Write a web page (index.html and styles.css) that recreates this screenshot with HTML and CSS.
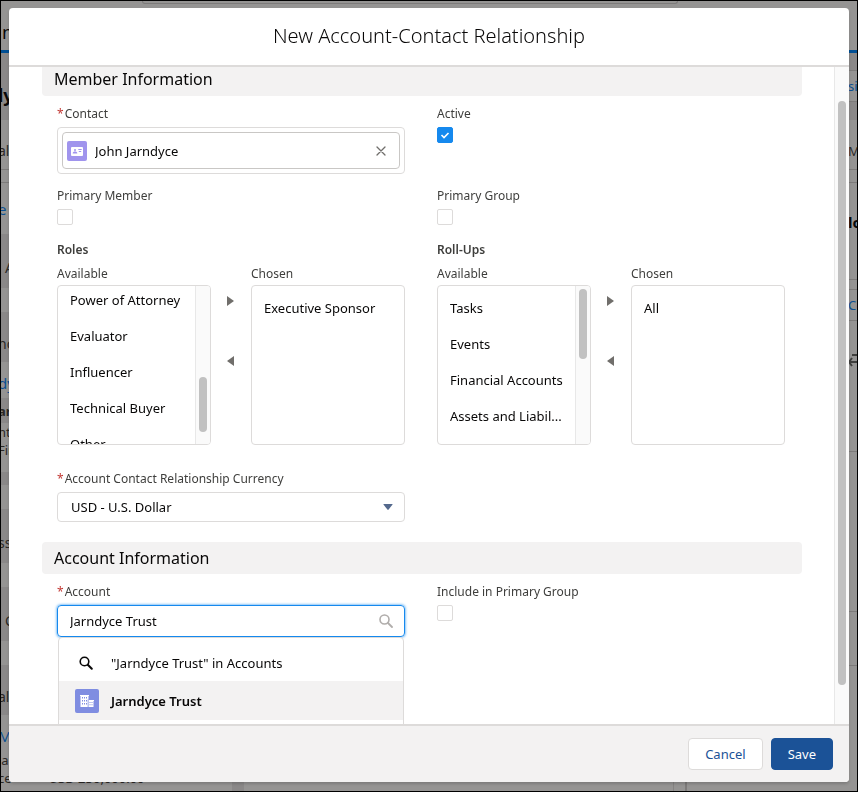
FILE: index.html
```html
<!DOCTYPE html>
<html lang="en">

<head>
    <meta charset="UTF-8">
    <meta name="viewport" content="width=device-width, initial-scale=1.0">
    <title>New Account-Contact Relationship</title>
    <link rel="stylesheet" href="styles.css">
</head>

<body>
    <!-- record page under the dialog -->
    <div class="page" aria-hidden="true">
        <div class="page-top">
            <div class="page-search"></div>
            <div class="page-nav">n</div>
        </div>
        <div class="page-main">
            <div class="page-left">
                <div class="strip dark h67 name">ly</div>
                <div class="strip h50 line head">al</div>
                <div class="strip h13 line"></div>
                <div class="strip h51 link">e</div>
                <div class="strip dark h54 inset">A</div>
                <div class="strip h24"></div>
                <div class="strip dark h50 head">nc</div>
                <div class="strip h36 link">dy</div>
                <div class="strip dark h25 bold">ar</div>
                <div class="strip h18">nt</div>
                <div class="strip h18">Fin</div>
                <div class="strip h13"></div>
                <div class="strip dark h13"></div>
                <div class="strip h24"></div>
                <div class="strip dark h54 head">ss</div>
                <div class="strip h24"></div>
                <div class="strip dark h54 inset">C</div>
                <div class="strip h24"></div>
                <div class="strip dark h50 head">al</div>
                <div class="strip h36 link">Mc</div>
                <div class="strip h18">ia</div>
                <div class="strip h18">ce <span class="amount">USD 250,000.00</span></div>
            </div>
            <div class="page-gutter"></div>
            <div class="page-middle"></div>
            <div class="page-split"></div>
            <div class="page-right">
                <div class="strip dark h18 line"></div>
                <div class="strip h31 link small line">si</div>
                <div class="strip dark h18"></div>
                <div class="strip h50 line">M</div>
                <div class="strip h13 line"></div>
                <div class="strip h97 line bold dark-text">lo</div>
                <div class="strip h10 line"></div>
                <div class="strip h31 line link small">Ce</div>
                <div class="strip h131 line">
                    <svg class="page-arrow" viewBox="0 0 12 14" width="12" height="14"><path d="M1 9h12M4 5L1 9l3 4M4 2h9" fill="none" stroke="#3e3e3c" stroke-width="2"/></svg>
                </div>
                <div class="strip h160 line"></div>
                <div class="strip h54 line"></div>
            </div>
        </div>
    </div>

    <div class="backdrop">
        <form class="modal" role="dialog" aria-labelledby="title">
            <header class="modal-header">
                <h1 id="title">New Account-Contact Relationship</h1>
            </header>

            <div class="modal-body">
                <div class="content">
                    <h2 class="section cut">Member Information</h2>

                    <div class="row">
                        <div class="field">
                            <label for="contact"><span class="req">*</span>Contact</label>
                            <div class="pill-box">
                                <div class="pill">
                                    <svg class="contact-icon" viewBox="0 0 20 20" width="20" height="20">
                                        <rect width="20" height="20" rx="2" fill="#a094ed"/>
                                        <rect x="4" y="6" width="12" height="9" rx="1" fill="#fff"/>
                                        <circle cx="8" cy="9" r="1" fill="#a094ed"/>
                                        <path d="M5.700 12.600c0-1.500 1-2 2.300-2s2.300.5 2.300 2zM11.300 8h3.400v1h-3.400zM11.800 10h2.400v1h-2.400z" fill="#a094ed"/>
                                    </svg>
                                    <input id="contact" type="text" value="John Jarndyce" readonly>
                                    <button type="button" class="clear" aria-label="Clear">
                                        <svg viewBox="0 0 10 10" width="10" height="10"><path d="M1 1l8 8M9 1L1 9" stroke="#706e6b" stroke-width="1.300" stroke-linecap="round"/></svg>
                                    </button>
                                </div>
                            </div>
                        </div>
                        <div class="field">
                            <label for="active">Active</label>
                            <input id="active" type="checkbox" checked>
                        </div>
                    </div>

                    <div class="row">
                        <div class="field">
                            <label for="primary-member">Primary Member</label>
                            <input id="primary-member" type="checkbox">
                        </div>
                        <div class="field">
                            <label for="primary-group">Primary Group</label>
                            <input id="primary-group" type="checkbox">
                        </div>
                    </div>

                    <div class="row lists">
                        <div role="group" aria-labelledby="roles">
                            <h3 id="roles">Roles</h3>
                            <div class="duel">
                                <div class="side">
                                    <span class="list-label" id="roles-available">Available</span>
                                    <div class="list">
                                        <ul class="scrolled" role="listbox" aria-labelledby="roles-available">
                                            <li role="option">Power of Attorney</li>
                                            <li role="option">Evaluator</li>
                                            <li role="option">Influencer</li>
                                            <li role="option">Technical Buyer</li>
                                            <li role="option">Other</li>
                                        </ul>
                                        <div class="track low"><div class="thumb"></div></div>
                                    </div>
                                </div>
                                <div class="movers">
                                    <button type="button" aria-label="Add role"><svg viewBox="0 0 8 10" width="8" height="10"><path d="M0 0l7 5-7 5z" fill="#706e6b"/></svg></button>
                                    <button type="button" aria-label="Remove role"><svg viewBox="0 0 8 10" width="8" height="10"><path d="M7 0L0 5l7 5z" fill="#706e6b"/></svg></button>
                                </div>
                                <div class="side">
                                    <span class="list-label" id="roles-chosen">Chosen</span>
                                    <div class="list">
                                        <ul role="listbox" aria-labelledby="roles-chosen">
                                            <li role="option">Executive Sponsor</li>
                                        </ul>
                                    </div>
                                </div>
                            </div>
                        </div>
                        <div role="group" aria-labelledby="rollups">
                            <h3 id="rollups">Roll-Ups</h3>
                            <div class="duel">
                                <div class="side">
                                    <span class="list-label" id="rollups-available">Available</span>
                                    <div class="list">
                                        <ul role="listbox" aria-labelledby="rollups-available">
                                            <li role="option">Tasks</li>
                                            <li role="option">Events</li>
                                            <li role="option">Financial Accounts</li>
                                            <li role="option">Assets and Liabil...</li>
                                        </ul>
                                        <div class="track"><div class="thumb"></div></div>
                                    </div>
                                </div>
                                <div class="movers">
                                    <button type="button" aria-label="Add roll-up"><svg viewBox="0 0 8 10" width="8" height="10"><path d="M0 0l7 5-7 5z" fill="#706e6b"/></svg></button>
                                    <button type="button" aria-label="Remove roll-up"><svg viewBox="0 0 8 10" width="8" height="10"><path d="M7 0L0 5l7 5z" fill="#706e6b"/></svg></button>
                                </div>
                                <div class="side">
                                    <span class="list-label" id="rollups-chosen">Chosen</span>
                                    <div class="list">
                                        <ul role="listbox" aria-labelledby="rollups-chosen">
                                            <li role="option">All</li>
                                        </ul>
                                    </div>
                                </div>
                            </div>
                        </div>
                    </div>

                    <div class="row">
                        <div class="field">
                            <label for="currency"><span class="req">*</span>Account Contact Relationship Currency</label>
                            <div class="select-box">
                                <select id="currency">
                                    <option>USD - U.S. Dollar</option>
                                </select>
                                <svg class="caret" viewBox="0 0 10 6" width="10" height="6"><path d="M1 0h8q1 0 .4.800L5.600 5.600q-.6.600-1.200 0L.6.800Q0 0 1 0z" fill="#54698d"/></svg>
                            </div>
                        </div>
                    </div>

                    <h2 class="section">Account Information</h2>

                    <div class="row">
                        <div class="field">
                            <label for="account"><span class="req">*</span>Account</label>
                            <div class="lookup">
                                <input id="account" type="text" value="Jarndyce Trust">
                                <svg class="lookup-icon" viewBox="0 0 14 14" width="14" height="14"><circle cx="5.500" cy="5.500" r="4.500" fill="none" stroke="#b0adab" stroke-width="1.600"/><path d="M9 9l4 4" stroke="#b0adab" stroke-width="1.800" stroke-linecap="round"/></svg>
                                <ul class="menu" role="listbox" aria-label="Accounts">
                                    <li role="option">
                                        <svg viewBox="0 0 24 24" width="24" height="24"><circle cx="9.500" cy="10.500" r="4.300" fill="none" stroke="#080707" stroke-width="1.600"/><path d="M12.800 13.800l4 4" stroke="#080707" stroke-width="2" stroke-linecap="round"/></svg>
                                        "Jarndyce Trust" in Accounts
                                    </li>
                                    <li class="current" role="option">
                                        <svg viewBox="0 0 24 24" width="24" height="24">
                                            <rect width="24" height="24" rx="2" fill="#7f8de1"/>
                                            <path d="M5 6h9v1h-.5v11h-8V7H5zM13 11h6v1h-.5v6H13z" fill="#fff"/>
                                            <path d="M7 8h1v1.500H7zM9 8h1v1.500H9zM11 8h1v1.500h-1zM7 11h1v1.500H7zM9 11h1v1.500H9zM11 11h1v1.500h-1zM7 14h1v1.500H7zM9 14h1v1.500H9zM11 14h1v1.500h-1zM14.500 13h1v1h-1zM16.500 13h1v1h-1zM14.500 15.300h1v1h-1zM16.500 15.300h1v1h-1zM12.700 10.500h.8v7.500h-.8z" fill="#7f8de1"/>
                                        </svg>
                                        Jarndyce Trust
                                    </li>
                                </ul>
                            </div>
                        </div>
                        <div class="field">
                            <label for="include">Include in Primary Group</label>
                            <input id="include" type="checkbox">
                        </div>
                    </div>
                </div>
                <div class="track main-track"><div class="thumb"></div></div>
            </div>

            <footer class="modal-footer">
                <button type="button" class="btn">Cancel</button>
                <button type="submit" class="btn brand">Save</button>
            </footer>
        </form>
    </div>
</body>

</html>
```
FILE: styles.css
```css
* {
    box-sizing: border-box;
}

body {
    margin: 0;
    height: 100vh;
    overflow: hidden;
    border: 1px solid black;
    font-family: "Noto Sans", "Open Sans", sans-serif;
    font-size: 13px;
    color: #080707;
}

h1, h2, h3, ul {
    margin: 0;
    padding: 0;
    font-weight: normal;
}

ul {
    list-style: none;
}

input, select, button {
    font-family: inherit;
    font-size: 13px;
    color: inherit;
}

svg {
    display: block;
    flex: none;
}

/* record page */
.page {
    display: flex;
    flex-direction: column;
    height: 100%;
    overflow: hidden;
    background-color: #959493;
    white-space: nowrap;
}

.page-top {
    flex: none;
    height: 52px;
    border-bottom: 3px solid #014f94;
}

.page-search {
    height: 3px;
    margin: 0 20.9% 0 16.5%;
    border: 1px solid #7d7b7a;
    border-top: none;
    border-radius: 0 0 4px 4px;
}

.page-nav {
    padding: 16px 1px;
    font-size: 18px;
    line-height: 24px;
}

.page-main {
    display: flex;
    flex: 1;
    min-height: 0;
}

.page-left {
    width: 27%;
    overflow: hidden;
}

.page-gutter {
    width: 12px;
    background-color: #8a8888;
}

.page-middle {
    flex: 1;
}

.page-split {
    width: 14px;
    border-left: 1px solid #858382;
    border-right: 2px solid #7d7b7a;
}

.page-right {
    width: 170px;
    padding-left: 161px;
    overflow: hidden;
}

.strip {
    display: flex;
    align-items: center;
    color: #2b2826;
}

.page-left .strip {
    text-indent: -3px;
}

.dark { background-color: #8a8888; }
.line { border-bottom: 1px solid #7d7b7a; }
.link { color: #0b4f91; font-size: 15px; }
.small { font-size: 13px; }
.head { font-size: 14px; }
.bold { font-weight: bold; }
.dark-text { font-size: 15px; color: #080707; }
.inset { padding-left: 7px; font-size: 14px; }

.name {
    padding-top: 16px;
    font-size: 18px;
    font-weight: bold;
    color: #080707;
}

.amount {
    margin-left: 40px;
}

.page-arrow {
    margin-bottom: 52px;
}

.h10 { height: 10px; }
.h13 { height: 13px; }
.h18 { height: 18px; }
.h24 { height: 24px; }
.h25 { height: 25px; }
.h31 { height: 31px; }
.h36 { height: 36px; padding-top: 6px; }
.h50 { height: 50px; padding-top: 12px; }
.h51 { height: 51px; }
.h54 { height: 54px; padding-top: 12px; }
.h67 { height: 67px; }
.h97 { height: 97px; padding-bottom: 18px; }
.h131 { height: 131px; }
.h160 { height: 160px; }

/* dialog */
.backdrop {
    position: fixed;
    inset: 0;
    display: flex;
    padding: 8px 9px 10px;
}

.modal {
    display: flex;
    flex: 1;
    flex-direction: column;
    min-width: 0;
    overflow: hidden;
    border-radius: 4px;
    background-color: white;
    box-shadow: 0 2px 3px rgba(0, 0, 0, 0.16);
}

.modal-header {
    padding: 14px 16px 15px;
    border-bottom: 2px solid #dddbda;
    text-align: center;
}

.modal-header h1 {
    font-size: 20px;
    font-weight: 300;
    line-height: 28px;
}

.modal-body {
    display: flex;
    flex: 1;
    min-height: 0;
    overflow: hidden;
}

.content {
    flex: 1;
    min-width: 0;
    padding: 0 32px 0 33px;
}

.section {
    margin-top: 20px;
    margin-bottom: 9px;
    padding: 4px 12px;
    border-radius: 4px;
    background-color: #f3f2f2;
    font-size: 16px;
    line-height: 24px;
}

.cut {
    margin-top: 0;
    padding: 0 12px 5px;
    border-radius: 0 0 4px 4px;
}

.row {
    display: grid;
    grid-template-columns: 1fr 1fr;
    gap: 32px;
    margin-bottom: 13px;
    padding: 0 17px 0 15px;
}

.lists {
    margin-top: 16px;
    margin-bottom: 25px;
}

label, .list-label {
    display: block;
    font-size: 12px;
    line-height: 18px;
    color: #3e3e3c;
}

.field > label {
    margin-bottom: 4px;
}

.req {
    margin-right: 1px;
    color: #c23934;
}

input[type="checkbox"] {
    appearance: none;
    display: block;
    width: 16px;
    height: 16px;
    margin: 0;
    border: 1px solid #dddbda;
    border-radius: 2px;
    background-color: white;
}

input[type="checkbox"]:checked {
    border-color: #1589ee;
    background: #1589ee url("data:image/svg+xml,%3Csvg xmlns='http://www.w3.org/2000/svg' viewBox='0 0 14 14'%3E%3Cpath d='M3.500 7l2.500 2.500 4.500-4.500' fill='none' stroke='white' stroke-width='1.600'/%3E%3C/svg%3E");
}

.pill-box {
    padding: 4px;
    border: 1px solid #dddbda;
    border-radius: 4px;
}

.pill {
    display: flex;
    align-items: center;
    height: 37px;
    padding: 0 12px 0 4px;
    border: 1px solid #c9c7c5;
    border-radius: 4px;
}

.pill input {
    flex: 1;
    min-width: 0;
    padding: 0 8px;
    border: none;
    outline: none;
    background: none;
}

.clear {
    padding: 1px;
    border: none;
    background: none;
}

/* dueling lists */
h3 {
    margin-bottom: 6px;
    font-size: 12px;
    font-weight: 600;
    line-height: 18px;
    color: #3e3e3c;
}

.duel {
    display: flex;
}

.side {
    flex: 1;
    min-width: 0;
}

.list {
    display: flex;
    height: 160px;
    margin-top: 2px;
    overflow: hidden;
    border: 1px solid #dddbda;
    border-radius: 4px;
}

.list ul {
    flex: 1;
    min-width: 0;
    padding: 4px 0;
}

.list .scrolled {
    margin-top: -8px;
}

.list li {
    padding: 8px 0 8px 12px;
    line-height: 20px;
    white-space: nowrap;
}

.track {
    width: 15px;
    padding: 3px 3px 0;
    border-left: 1px solid #e8e8e8;
    background-color: #fafafa;
}

.thumb {
    width: 8px;
    height: 70px;
    border-radius: 4px;
    background-color: #c1c1c1;
}

.low {
    padding-top: 91px;
}

.low .thumb {
    height: 55px;
}

.main-track {
    padding-top: 34px;
    padding-bottom: 39px;
}

.main-track .thumb {
    height: 100%;
}

.movers {
    display: flex;
    flex-direction: column;
    align-items: center;
    gap: 28px;
    width: 40px;
    padding-top: 20px;
}

.movers button {
    width: 32px;
    height: 32px;
    padding: 0 12px;
    border: none;
    background: none;
}

.select-box {
    display: flex;
    align-items: center;
    border: 1px solid #dddbda;
    border-radius: 4px;
    padding-right: 11px;
}

select {
    appearance: none;
    flex: 1;
    height: 28px;
    padding: 0 13px;
    border: none;
    background: none;
}

/* account lookup */
.lookup {
    position: relative;
    display: flex;
    align-items: center;
    height: 32px;
    padding-right: 11px;
    border: 1px solid #1589ee;
    border-radius: 4px;
    box-shadow: 0 0 3px #1589ee;
}

.lookup input {
    flex: 1;
    min-width: 0;
    padding: 0 12px;
    border: none;
    outline: none;
    background: none;
}

.menu {
    position: absolute;
    top: 100%;
    left: 0;
    right: 0;
    margin-top: 1px;
    padding: 7px 0;
    border: 1px solid #dddbda;
    border-radius: 4px;
    background-color: white;
}

.menu li {
    display: flex;
    align-items: center;
    gap: 12px;
    height: 36px;
    padding: 0 16px;
}

.menu .current {
    height: 39px;
    background-color: #f3f2f2;
    font-weight: 600;
}

.modal-footer {
    display: flex;
    justify-content: flex-end;
    gap: 8px;
    padding: 12px 16px;
    border-top: 2px solid #dddbda;
    background-color: #f3f2f2;
}

.btn {
    height: 32px;
    padding: 0 16px;
    border: 1px solid #dddbda;
    border-radius: 4px;
    background-color: white;
    color: #1b5297;
}

.brand {
    border-color: #1b5297;
    background-color: #1b5297;
    color: white;
}
```
